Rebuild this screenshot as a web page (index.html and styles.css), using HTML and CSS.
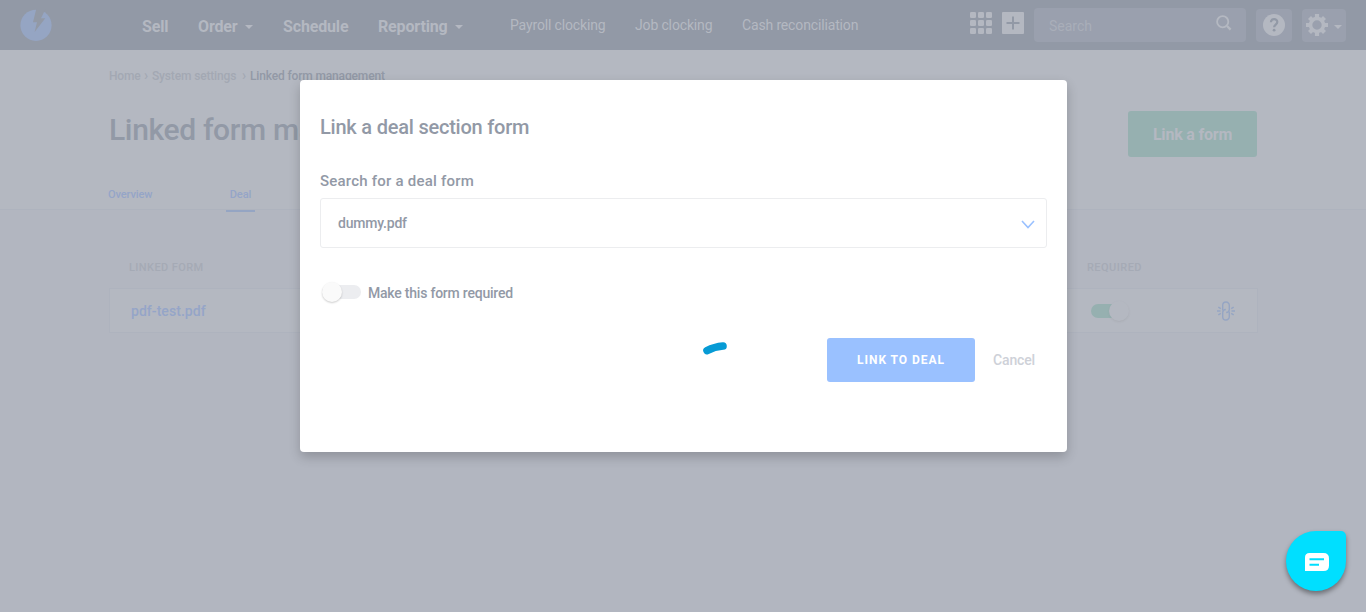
FILE: index.html
```html
<!DOCTYPE html>
<html lang="en">
<head>
<meta charset="utf-8">
<title>Linked form management</title>
<link rel="stylesheet" href="styles.css">
</head>
<body>
<div class="page">
  <header class="topbar">
    <svg class="logo" width="32" height="32" viewBox="0 0 32 32"><circle cx="16" cy="16.300" r="15.600" fill="#95a5c3"/><path fill="#9299a6" d="M16.500-1 13 13.200h4L14.600 23 25.300 9.200H21L25.500 0V-1Z"/></svg>
    <nav class="main-nav">
      <a class="n-sell">Sell</a>
      <a class="n-order">Order <i class="caret"></i></a>
      <a class="n-schedule">Schedule</a>
      <a class="n-reporting">Reporting <i class="caret"></i></a>
    </nav>
    <nav class="sub-nav">
      <a class="s-payroll">Payroll clocking</a>
      <a class="s-job">Job clocking</a>
      <a class="s-cash">Cash reconciliation</a>
    </nav>
    <div class="tools">
      <svg class="apps" width="22" height="22" viewBox="0 0 22 22" fill="#b4b8c1"><rect width="6" height="6" rx="1.3"/><rect x="8" width="6" height="6" rx="1.3"/><rect x="16" width="6" height="6" rx="1.3"/><rect y="8" width="6" height="6" rx="1.3"/><rect x="8" y="8" width="6" height="6" rx="1.3"/><rect x="16" y="8" width="6" height="6" rx="1.3"/><rect y="16" width="6" height="6" rx="1.3"/><rect x="8" y="16" width="6" height="6" rx="1.3"/><rect x="16" y="16" width="6" height="6" rx="1.3"/></svg>
      <svg class="add" width="22" height="22" viewBox="0 0 22 22"><rect width="22" height="22" rx="1" fill="#b4b8c1"/><path d="M11 4.5v13M4.5 11h13" stroke="#9299a6" stroke-width="2"/></svg>
      <div class="search"><span>Search</span>
        <svg width="16" height="16" viewBox="0 0 16 16" fill="none" stroke="#b4b8c1"><circle cx="6.7" cy="6.7" r="5.6" stroke-width="1.8"/><path d="m11 11 3.6 3.6" stroke-width="2.4"/></svg>
      </div>
      <div class="tool help"><svg width="22" height="22" viewBox="0 0 22 22"><circle cx="11" cy="11" r="11" fill="#b4b8c1"/><path d="M7.9 8.3c0-4.2 6.4-4.2 6.4-.3 0 2.5-3.2 2.7-3.2 5.3" fill="none" stroke="#9299a6" stroke-width="2.2"/><circle cx="11.1" cy="16.2" r="1.4" fill="#9299a6"/></svg></div>
      <div class="tool gear"><svg width="22" height="22" viewBox="-11 -11 22 22"><g stroke="#b4b8c1" stroke-width="4.2"><path d="M0-11V-6M0 6V11M-11 0H-6M6 0H11"/><path d="M-7.5-7.5-4.5-4.5M7.5 7.5 4.5 4.5M7.5-7.5 4.5-4.5M-7.5 7.5-4.5 4.5"/></g><circle r="6.5" fill="none" stroke="#b4b8c1" stroke-width="3.6"/></svg><i class="caret"></i></div>
    </div>
  </header>
  <section class="heading">
    <div class="crumbs"><span class="c-home">Home</span><b>›</b><span class="c-system">System settings</span><b>›</b><span class="c-current">Linked form management</span></div>
    <div class="title-row"><h1>Linked form management</h1><button class="link-form"><span>Link a form</span></button></div>
    <div class="tabs"><a class="t-overview">Overview</a><a class="active"><span>Deal</span></a></div>
  </section>
  <main class="content">
    <div class="table-head"><span class="h-form">LINKED FORM</span><span class="h-required">REQUIRED</span></div>
    <div class="row"><a>pdf-test.pdf</a><span class="switch on"><i></i></span>
      <svg class="unlink" width="18" height="20" viewBox="0 0 18 20" fill="none" stroke="#95a5c3" stroke-width="1.4"><path d="M5.700 9.500V4.300A3.300 3.300 0 0 1 12.300 4.300V8.500A3.200 3.200 0 0 1 9.200 11.500"/><path d="M12.300 10.500V15.700A3.300 3.300 0 0 1 5.700 15.700V11.500A3.200 3.200 0 0 1 8.800 8.500"/><path d="M0 10h3.500M14.500 10H18M1.300 6.200l2.500 1.500M1.300 13.800l2.500-1.500M16.700 6.200l-2.500 1.500M16.700 13.800l-2.500-1.500"/></svg>
    </div>
  </main>
</div>
<div class="modal">
  <h2><span>Link a deal section form</span></h2>
  <label class="field-label"><span>Search for a deal form</span></label>
  <div class="select"><span>dummy.pdf</span><svg width="14" height="9" viewBox="0 0 14 9" fill="none" stroke="#9ac1ff" stroke-width="1.6"><path d="m1 1 6 6.500L13 1"/></svg></div>
  <div class="option"><span class="switch"><i></i></span><span class="option-text">Make this form required</span></div>
  <div class="actions"><button class="submit"><span>LINK TO DEAL</span></button><a class="cancel">Cancel</a></div>
  <svg class="spinner" width="28" height="16" viewBox="0 0 28 16"><path d="M6 10.600Q13.500 6.700 22 6" fill="none" stroke="#069bd5" stroke-width="7.600" stroke-linecap="round"/></svg>
</div>
<div class="chat"><svg width="24" height="18" viewBox="0 0 24 18"><path d="M4.500 0h14Q24 0 24 5.500v7Q24 18 18.500 18H0V4.500Q0 0 4.500 0Z" fill="#fff"/><path d="M4.500 6.200h14.500M4.500 11.700H14" stroke="#00dfff" stroke-width="1.900"/></svg></div>
</body>
</html>
```
FILE: styles.css
```css
* { box-sizing: border-box; }
body { margin: 0; font-family: Roboto, sans-serif; font-weight: 500; background: #b2b6c0; overflow: hidden; }
button { border: 0; padding: 0; font-family: inherit; }
h1, h2 { margin: 0; font-weight: 500; white-space: nowrap; }
a, span { white-space: nowrap; }
.page { height: 612px; }

.topbar { height: 50px; display: flex; background: #9299a6; color: #b4b8c1; }
.logo { margin: 9px 0 0 20px; flex: none; }
.main-nav { display: flex; width: 368px; margin-left: 90px; font-size: 16px; font-weight: 700; line-height: 54px; letter-spacing: -.15px; }
.n-sell { width: 56px; }
.n-order { width: 85px; }
.n-schedule { width: 95px; }
.caret { display: inline-block; border: 4px solid transparent; border-top-color: #b4b8c1; border-bottom: 0; vertical-align: 3px; margin-left: 4px; }
.sub-nav { display: flex; width: 459px; font-size: 14px; font-weight: 400; line-height: 51px; letter-spacing: -.15px; }
.s-payroll { width: 125px; }
.s-job { width: 107px; }
.tools { display: flex; }
.apps { margin: 12px 10px 0 1px; }
.add { margin-top: 12px; }
.search { width: 212px; height: 34px; margin: 8px 10px 0; padding: 0 15px; display: flex; justify-content: space-between; background: #9aa0ae; border-radius: 4px; font-size: 14px; font-weight: 400; line-height: 37px; color: #a9aeb9; }
.search svg { margin: 7px -1px 0 0; }
.tool { height: 33px; margin-top: 9px; padding-top: 5px; background: #9aa0ae; border-radius: 4px; }
.help { width: 36px; padding-left: 7px; }
.gear { width: 44px; margin-left: 10px; padding-left: 4px; display: flex; }
.gear .caret { margin: 11px 0 0 6px; height: 4px; }

.heading { height: 160px; padding: 0 109px; background: #b4b8c1; border-bottom: 1px solid #aeb3be; }
.crumbs { height: 50px; display: flex; font-size: 12px; line-height: 53px; letter-spacing: -.15px; color: #a3a8b3; }
.crumbs b { width: 12px; text-align: center; font-weight: 500; font-size: 14px; line-height: 51px; }
.c-home { width: 31px; }
.c-system { width: 86px; }
.c-current { color: #9299a6; }
.title-row { height: 68px; display: flex; justify-content: space-between; padding-top: 11px; }
h1 { font-size: 30px; line-height: 38px; letter-spacing: -.35px; color: #9299a6; }
.link-form { width: 129px; height: 46px; border-radius: 3px; background: #96b0b0; color: #b4b8c1; font-size: 16px; font-weight: 700; letter-spacing: -.2px; }
.tabs { display: flex; height: 44px; margin-left: -1px; font-size: 11px; color: #95a5c8; line-height: 53px; letter-spacing: -.1px; }
.t-overview { width: 118px; }
.active { width: 29px; height: 44px; border-bottom: 2px solid #95a5c3; text-align: center; }

.content { padding: 0 109px; }
.table-head { height: 78px; display: flex; padding: 48px 0 0 20px; font-size: 11px; line-height: 20px; letter-spacing: .4px; color: #a5aab5; }
.h-form { width: 958px; }
.h-required { letter-spacing: .45px; }
.row { height: 45px; width: 1149px; display: flex; align-items: center; padding-left: 21px; background: #b4b8c1; border: 1px solid #aeb3be; color: #95a5c8; font-size: 14px; }
.row a { width: 960px; letter-spacing: .05px; }
.switch { width: 38px; height: 14px; border-radius: 7px; background: #ecedf0; position: relative; }
.switch i { position: absolute; width: 20px; height: 20px; left: 0; top: -3px; border-radius: 50%; background: #fafafa; box-shadow: 0 1px 2px #0003; }
.switch.on { background: linear-gradient(90deg, #96b0b0 28px, transparent 28px); }
.switch.on i { left: 18px; background: #b4b8c1; box-shadow: 0 1px 2px #6662; }
.unlink { margin-left: 88px; }

.modal { position: absolute; left: 300px; top: 80px; width: 767px; height: 372px; padding: 32px 20px 0; background: #fff; border-radius: 4px; box-shadow: 0 5px 12px #00000033; color: #9299a6; }
h2 { font-size: 20px; line-height: 30px; letter-spacing: -.22px; }
.field-label { display: block; margin-top: 26px; font-size: 15px; line-height: 26px; letter-spacing: .22px; }
.select { height: 50px; margin-top: 4px; padding: 0 11px 0 17px; display: flex; align-items: center; justify-content: space-between; border: 1px solid #ecedef; border-radius: 3px; font-size: 14px; letter-spacing: -.2px; }
.select svg { margin-top: 2px; }
.option { display: flex; align-items: center; height: 20px; margin-top: 34px; padding-left: 2px; font-size: 14px; letter-spacing: -.22px; }
.option .switch { width: 39px; margin-right: 7px; }
.option-text { padding-top: 2px; }
.actions { display: flex; justify-content: flex-end; height: 44px; margin-top: 36px; line-height: 44px; }
.submit { width: 148px; height: 44px; border-radius: 3px; background: #9ac1ff; color: #fff; font-size: 12px; font-weight: 700; letter-spacing: .95px; }
.cancel { width: 54px; margin: 0 0 0 18px; font-size: 14px; letter-spacing: -.15px; color: #ced1d8; }
.spinner { position: absolute; left: 401px; top: 260px; }
.chat { position: absolute; left: 1286px; top: 531px; width: 60px; height: 60px; padding: 22px 0 0 19px; border-radius: 30px 5px 30px 30px; background: #00dfff; box-shadow: 0 3px 5px #0006; }
```
